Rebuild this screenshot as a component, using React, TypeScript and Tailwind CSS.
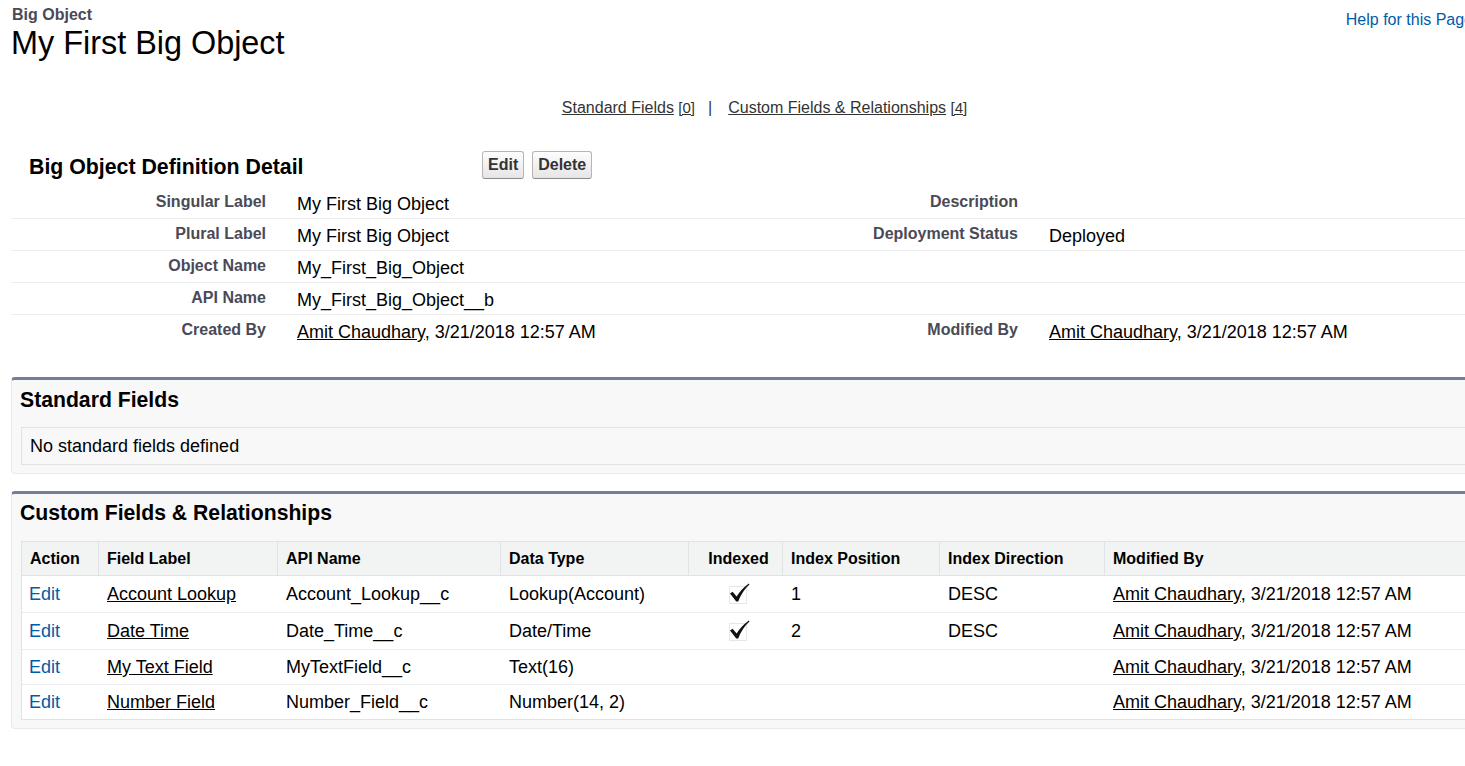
import React from "react";

function Amit() {
  return (
    <span>
      <a className="underline text-black">Amit Chaudhary</a>, 3/21/2018 12:57 AM
    </span>
  );
}

function Check() {
  return (
    <svg width="22" height="22" viewBox="0 0 22 22" className="block">
      <rect x="1.5" y="3.5" width="17" height="17" fill="none" stroke="#cfcfcf" strokeWidth="1" strokeDasharray="1 1" />
      <path d="M2 10.5 L4.6 8.8 L8.6 13.6 Q13 6.5 20.8 0.6 L21.4 1.6 Q14.2 8.2 10.2 18.6 L8.2 18.6 Z" fill="#111" />
    </svg>
  );
}

type DetailRow = { l1: string; v1: React.ReactNode; l2: string; v2: React.ReactNode };

const detailRows: DetailRow[] = [
  { l1: "Singular Label", v1: "My First Big Object", l2: "Description", v2: "" },
  { l1: "Plural Label", v1: "My First Big Object", l2: "Deployment Status", v2: "Deployed" },
  { l1: "Object Name", v1: "My_First_Big_Object", l2: "", v2: "" },
  { l1: "API Name", v1: "My_First_Big_Object__b", l2: "", v2: "" },
  { l1: "Created By", v1: <Amit />, l2: "Modified By", v2: <Amit /> },
];

type FieldRow = {
  label: string;
  api: string;
  type: string;
  indexed: boolean;
  pos: string;
  dir: string;
  tall: boolean;
};

const fields: FieldRow[] = [
  { label: "Account Lookup", api: "Account_Lookup__c", type: "Lookup(Account)", indexed: true, pos: "1", dir: "DESC", tall: true },
  { label: "Date Time", api: "Date_Time__c", type: "Date/Time", indexed: true, pos: "2", dir: "DESC", tall: true },
  { label: "My Text Field", api: "MyTextField__c", type: "Text(16)", indexed: false, pos: "", dir: "", tall: false },
  { label: "Number Field", api: "Number_Field__c", type: "Number(14, 2)", indexed: false, pos: "", dir: "", tall: false },
];

const cols = "grid grid-cols-[76px_179px_223px_188px_94px_157px_165px_1fr]";

function Btn({ children }: { children: React.ReactNode }) {
  return (
    <button className="h-[28px] px-[5px] rounded-[3px] border border-[#b5b5b5] border-b-[#8a8a8a] bg-linear-to-b from-[#fdfdfd] to-[#e6e6e6] text-[16px] leading-[20px] font-bold text-[#333]">
      {children}
    </button>
  );
}

export default function App() {
  return (
    <div className="w-[1465px] overflow-hidden bg-white font-['Liberation_Sans',Arial,sans-serif] text-black">
      <div className="w-[1529px] px-[11px] pt-[5px] pb-[40px]">
        {/* Page title */}
        <div className="flex justify-between items-start">
          <div>
            <div className="text-[16px] leading-[20px] font-bold text-[#4a4a56] pl-[1px]">Big Object</div>
            <h1 className="text-[32.4px] leading-[37px] font-normal text-black">My First Big Object</h1>
          </div>
          <a className="mt-[5px] mr-[45px] text-[16px] leading-[20px] text-[#015ba7]">Help for this Page</a>
        </div>

        {/* Related list links */}
        <div className="mt-[36px] text-center text-[16px] leading-[20px] text-[#333]">
          <a className="underline">Standard Fields</a> <span className="underline text-[15px]">[0]</span>
          <span className="pl-[13px] pr-[16px]">|</span>
          <a className="underline">Custom Fields &amp; Relationships</a> <span className="underline text-[15px]">[4]</span>
        </div>

        {/* Detail block */}
        <div className="mt-[33px] flex items-center h-[28px]">
          <div className="w-[471px] pl-[18px] pt-[3px] text-[21.3px] leading-[24px] font-bold">Big Object Definition Detail</div>
          <div className="flex gap-[8px]">
            <Btn>Edit</Btn>
            <Btn>Delete</Btn>
          </div>
        </div>
        <div className="mt-[8px]">
          {detailRows.map((r, i) => (
            <div
              key={i}
              className={`grid grid-cols-[272px_482px_271px_1fr] h-[32px] ${i < detailRows.length - 1 ? "border-b border-[#ececec]" : ""}`}
            >
              <div className="text-right pr-[17px] pt-[5px] text-[16px] leading-[20px] font-bold text-[#4a4a56]">{r.l1}</div>
              <div className="pl-[14px] pt-[6px] text-[18px] leading-[22px]">{r.v1}</div>
              <div className="text-right pr-[18px] pt-[5px] text-[16px] leading-[20px] font-bold text-[#4a4a56]">{r.l2}</div>
              <div className="pl-[13px] pt-[6px] text-[18px] leading-[22px]">{r.v2}</div>
            </div>
          ))}
        </div>

        {/* Standard Fields panel */}
        <div className="mt-[30px] bg-[#f8f8f8] border border-[#eaeaea] border-t-[3px] border-t-[#747e96] rounded-[4px] pl-[9px] pb-[8px]">
          <h3 className="pt-[8px] pb-[15px] text-[21.2px] leading-[24px] font-bold -ml-[1px]">Standard Fields</h3>
          <div className="border border-[#e0e3e5] bg-[#f8f8f8] px-[8px] py-[7px] text-[18px] leading-[22px]">
            No standard fields defined
          </div>
        </div>

        {/* Custom Fields panel */}
        <div className="mt-[17px] bg-[#f8f8f8] border border-[#eaeaea] border-t-[3px] border-t-[#747e96] rounded-[4px] pl-[9px] pb-[8px]">
          <h3 className="pt-[7px] pb-[16px] text-[21.2px] leading-[24px] font-bold -ml-[1px]">Custom Fields &amp; Relationships</h3>
          <div className="border-t border-l border-[#e0e3e5] bg-white">
            <div className={`${cols} h-[34px] border-b border-[#e0e3e5] bg-[#f2f3f3] text-[16px] font-bold`}>
              <div className="flex items-center pl-[8px]">Action</div>
              <div className="flex items-center pl-[8px] border-l border-[#e0e3e5]">Field Label</div>
              <div className="flex items-center pl-[8px] border-l border-[#e0e3e5]">API Name</div>
              <div className="flex items-center pl-[8px] border-l border-[#e0e3e5]">Data Type</div>
              <div className="flex items-center justify-center pl-[6px] border-l border-[#e0e3e5]">Indexed</div>
              <div className="flex items-center pl-[8px] border-l border-[#e0e3e5]">Index Position</div>
              <div className="flex items-center pl-[8px] border-l border-[#e0e3e5]">Index Direction</div>
              <div className="flex items-center pl-[8px] border-l border-[#e0e3e5]">Modified By</div>
            </div>
            {fields.map((f, i) => (
              <div
                key={i}
                className={`${cols} ${f.tall ? "h-[37px]" : "h-[35px]"} border-b ${i === fields.length - 1 ? "border-[#e0e3e5]" : "border-[#ededed]"} text-[18px] leading-[22px]`}
              >
                <div className="flex items-center pl-[7px]">
                  <a className="text-[#015ba7]">Edit</a>
                </div>
                <div className="flex items-center pl-[9px]">
                  <a className="underline">{f.label}</a>
                </div>
                <div className="flex items-center pl-[9px]">{f.api}</div>
                <div className="flex items-center pl-[9px]">{f.type}</div>
                <div className="flex items-center justify-center pl-[8px]">{f.indexed ? <Check /> : null}</div>
                <div className="flex items-center pl-[9px]">{f.pos}</div>
                <div className="flex items-center pl-[9px]">{f.dir}</div>
                <div className="flex items-center pl-[9px]">
                  <Amit />
                </div>
              </div>
            ))}
          </div>
        </div>
      </div>
    </div>
  );
}
